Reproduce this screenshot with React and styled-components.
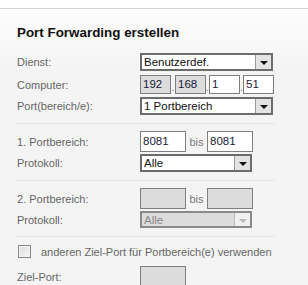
import React from 'react';
import styled, { createGlobalStyle } from 'styled-components';

const GlobalStyle = createGlobalStyle`
  html, body {
    margin: 0;
    padding: 0;
    background: #ffffff;
  }
  body {
    font-family: "Liberation Sans", Arial, sans-serif;
  }
`;

const Page = styled.div`
  width: 308px;
  height: 285px;
  overflow: hidden;
  padding-top: 8px;
  box-sizing: border-box;
`;

const Panel = styled.div`
  border-top: 1px solid #d2d2d2;
  background: linear-gradient(#fdfdfd, #f4f4f4 60px, #f4f4f4);
  height: 277px;
  padding: 0 33px 0 17px;
  box-sizing: border-box;
`;

const Title = styled.h2`
  margin: 0;
  padding-top: 16px;
  height: 35px;
  box-sizing: border-box;
  font-size: 13.4px;
  font-weight: bold;
  color: #111;
  line-height: 16px;
`;

const Row = styled.div`
  display: flex;
  align-items: center;
  height: ${(p) => p.h || 18}px;
  margin-top: ${(p) => p.mt || 0}px;
`;

const Label = styled.span`
  width: 123px;
  flex-shrink: 0;
  font-size: 11px;
  color: #666;
`;

const Separator = styled.div`
  height: 1px;
  background: #e4e4e4;
  margin-top: ${(p) => p.mt || 0}px;
`;

const Select = styled.div`
  display: flex;
  align-items: stretch;
  width: ${(p) => p.w}px;
  height: ${(p) => p.h || 18}px;
  box-sizing: border-box;
  border: 2px solid ${(p) => (p.disabled ? '#8a8a8a' : '#6c6c6c')};
  background: ${(p) => (p.disabled ? '#dcdcdc' : '#fff')};
`;

const SelectText = styled.span`
  flex: 1;
  padding-left: 2px;
  font-size: 11.5px;
  line-height: 14px;
  color: ${(p) => (p.disabled ? '#8a8a8a' : '#111')};
`;

const Arrow = styled.span`
  width: 15px;
  display: flex;
  align-items: center;
  justify-content: center;
  border-left: 1px solid ${(p) => (p.disabled ? '#bbb' : '#999')};
  background: ${(p) => (p.disabled ? '#f0f0f0' : '#e3e3e3')};
  &::after {
    content: '';
    margin-top: 2px;
    border-left: 4px solid transparent;
    border-right: 4px solid transparent;
    border-top: 4px solid ${(p) => (p.disabled ? '#b8b8b8' : '#111')};
  }
`;

const Input = styled.div`
  width: ${(p) => p.w}px;
  height: ${(p) => p.h || 20}px;
  box-sizing: border-box;
  border: 1px solid #7f7f7f;
  background: ${(p) => (p.disabled ? '#dcdcdc' : '#fff')};
  font-size: 11.5px;
  line-height: ${(p) => (p.h || 20) - 2}px;
  padding-left: 2px;
  color: #1a1a40;
`;

const Dot = styled.span`
  width: ${(p) => p.w || 4}px;
  font-size: 10px;
  color: #777;
  align-self: flex-end;
  text-align: center;
  line-height: 12px;
`;

const Bis = styled.span`
  width: 21px;
  text-align: center;
  font-size: 11px;
  color: #777;
`;

const Check = styled.span`
  flex-shrink: 0;
  width: 11px;
  height: 11px;
  margin-left: 1px;
  border: 1px solid #8a8a8a;
  background: linear-gradient(135deg, #dcdcdc, #f7f7f7);
  box-shadow: inset 0 0 0 1px #f2f2f2;
`;

const CheckText = styled.span`
  margin-left: 10px;
  font-size: 11px;
  color: #666;
  white-space: nowrap;
`;

function Dropdown({ w, value, disabled, h }) {
  return (
    <Select w={w} h={h} disabled={disabled}>
      <SelectText disabled={disabled}>{value}</SelectText>
      <Arrow disabled={disabled} />
    </Select>
  );
}

export default function App() {
  return (
    <Page>
      <GlobalStyle />
      <Panel>
        <Title>Port Forwarding erstellen</Title>
        <Row mt={9}>
          <Label>Dienst:</Label>
          <Dropdown w={133} value="Benutzerdef." />
        </Row>
        <Row mt={4} h={19}>
          <Label>Computer:</Label>
          <Input w={31} h={19} disabled>192</Input>
          <Dot w={4}>.</Dot>
          <Input w={31} h={19} disabled>168</Input>
          <Dot w={3}>.</Dot>
          <Input w={31} h={19}>1</Input>
          <Dot w={3}>.</Dot>
          <Input w={31} h={19}>51</Input>
        </Row>
        <Row mt={3}>
          <Label>Port(bereich/e):</Label>
          <Dropdown w={133} value="1 Portbereich" />
        </Row>
        <Separator mt={8} />
        <Row mt={7} h={21}>
          <Label>1. Portbereich:</Label>
          <Input w={46} h={21}>8081</Input>
          <Bis>bis</Bis>
          <Input w={46} h={21}>8081</Input>
        </Row>
        <Row mt={2}>
          <Label>Protokoll:</Label>
          <Dropdown w={112} value="Alle" />
        </Row>
        <Separator mt={8} />
        <Row mt={7} h={21}>
          <Label>2. Portbereich:</Label>
          <Input w={46} h={21} disabled />
          <Bis>bis</Bis>
          <Input w={46} h={21} disabled />
        </Row>
        <Row mt={2} h={17}>
          <Label>Protokoll:</Label>
          <Dropdown w={112} h={17} value="Alle" disabled />
        </Row>
        <Separator mt={8} />
        <Row mt={8} h={13}>
          <Check />
          <CheckText>anderen Ziel-Port für Portbereich(e) verwenden</CheckText>
        </Row>
        <Row mt={8} h={21}>
          <Label>Ziel-Port:</Label>
          <Input w={46} h={21} disabled />
        </Row>
        <Separator mt={7} />
      </Panel>
    </Page>
  );
}
